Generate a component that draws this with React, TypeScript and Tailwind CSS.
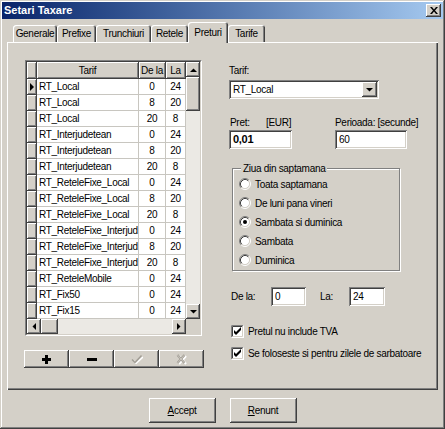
import React from "react";

const raised =
  "bg-[#d4d0c8] shadow-[inset_-1px_-1px_0_#404040,inset_1px_1px_0_#ffffff,inset_-2px_-2px_0_#808080]";
const sunken =
  "bg-white shadow-[inset_1px_1px_0_#808080,inset_-1px_-1px_0_#ffffff,inset_2px_2px_0_#404040,inset_-2px_-2px_0_#d4d0c8]";
const cellRaised =
  "bg-[#d4d0c8] border-r border-b border-[#404040] shadow-[inset_1px_1px_0_#ffffff,inset_-1px_-1px_0_#808080]";

const rows: Array<[string, number, number]> = [
  ["RT_Local", 0, 24],
  ["RT_Local", 8, 20],
  ["RT_Local", 20, 8],
  ["RT_Interjudetean", 0, 24],
  ["RT_Interjudetean", 8, 20],
  ["RT_Interjudetean", 20, 8],
  ["RT_ReteleFixe_Local", 0, 24],
  ["RT_ReteleFixe_Local", 8, 20],
  ["RT_ReteleFixe_Local", 20, 8],
  ["RT_ReteleFixe_Interjud", 0, 24],
  ["RT_ReteleFixe_Interjud", 8, 20],
  ["RT_ReteleFixe_Interjud", 20, 8],
  ["RT_ReteleMobile", 0, 24],
  ["RT_Fix50", 0, 24],
  ["RT_Fix15", 0, 24],
];

const tabs = [
  { label: "Generale", w: "w-[44px]" },
  { label: "Prefixe", w: "w-[39px]" },
  { label: "Trunchiuri", w: "w-[55px]" },
  { label: "Retele", w: "w-[37px]" },
  { label: "Preturi", w: "w-[40px]", active: true },
  { label: "Tarife", w: "w-[37px]" },
];

const Arrow = ({ dir }: { dir: "up" | "down" | "left" | "right" }) => {
  const pts = {
    up: "0,4 7,4 3.5,0.5",
    down: "0,0 7,0 3.5,3.5",
    left: "4,0 4,7 0.5,3.5",
    right: "0,0 0,7 3.5,3.5",
  }[dir];
  const vertical = dir === "up" || dir === "down";
  return (
    <svg width={vertical ? 7 : 4} height={vertical ? 4 : 7} viewBox={vertical ? "0 0 7 4" : "0 0 4 7"}>
      <polygon points={pts} fill="#000" />
    </svg>
  );
};

const ScrollBtn = ({ dir }: { dir: "up" | "down" | "left" | "right" }) => (
  <div className={`${raised} flex h-[15px] w-[14px] shrink-0 items-center justify-center`}>
    <Arrow dir={dir} />
  </div>
);

const Radio = ({ checked }: { checked?: boolean }) => (
  <svg width="12" height="12" viewBox="0 0 12 12" className="shrink-0">
    <circle cx="6" cy="6" r="4.5" fill="#fff" />
    <path d="M2.11 9.89 A5.5 5.5 0 0 1 9.89 2.11" fill="none" stroke="#808080" />
    <path d="M9.89 2.11 A5.5 5.5 0 0 1 2.11 9.89" fill="none" stroke="#ffffff" />
    <path d="M2.82 9.18 A4.5 4.5 0 0 1 9.18 2.82" fill="none" stroke="#404040" />
    <path d="M9.18 2.82 A4.5 4.5 0 0 1 2.82 9.18" fill="none" stroke="#d4d0c8" />
    {checked && <circle cx="6" cy="6" r="2" fill="#000" />}
  </svg>
);

const Check = () => (
  <svg width="13" height="13" viewBox="0 0 13 13" className="shrink-0">
    <rect x="0" y="0" width="13" height="13" fill="#ffffff" />
    <path d="M0.5 12.5 V0.5 H12.5" fill="none" stroke="#808080" />
    <path d="M1.5 11.5 V1.5 H11.5" fill="none" stroke="#404040" />
    <path d="M1.5 11.5 H11.5 V1.5" fill="none" stroke="#d4d0c8" />
    <path d="M0.5 12.5 H12.5 V0.5" fill="none" stroke="#ffffff" />
    <path d="M3 5 L5 7 L10 2 L10 5 L5 10 L3 8 Z" fill="#000" />
  </svg>
);

const ToolIcon = ({ kind }: { kind: "plus" | "minus" | "ok" | "cancel" }) => {
  if (kind === "plus")
    return (
      <svg width="9" height="9" viewBox="0 0 9 9">
        <path d="M3 0 H6 V3 H9 V6 H6 V9 H3 V6 H0 V3 H3 Z" fill="#000" />
      </svg>
    );
  if (kind === "minus")
    return (
      <svg width="10" height="3" viewBox="0 0 10 3">
        <rect width="10" height="3" fill="#000" />
      </svg>
    );
  if (kind === "ok")
    return (
      <svg width="12" height="10" viewBox="0 0 12 10">
        <path d="M2 6 L4 8.5 L11 2" fill="none" stroke="#ffffff" strokeWidth="1.4" transform="translate(1 1)" />
        <path d="M1 5.5 L4 8.5 L10.5 1.5" fill="none" stroke="#a09c94" strokeWidth="1.4" />
      </svg>
    );
  return (
    <svg width="11" height="11" viewBox="0 0 11 11">
      <path d="M2 1 L9 9 M9 1 L2 9" fill="none" stroke="#ffffff" strokeWidth="2.2" transform="translate(1 1)" />
      <path d="M1.5 1 L8.5 9 M8.5 1 L1.5 9" fill="none" stroke="#a09c94" strokeWidth="2.2" />
      <path d="M1.5 1 L8.5 9 M8.5 1 L1.5 9" fill="none" stroke="#d4d0c8" strokeWidth="0.8" />
    </svg>
  );
};

const DataGrid = () => (
  <div className="w-[177px] border border-t-[#808080] border-l-[#808080] border-b-white border-r-white">
    <div className="border border-t-[#404040] border-l-[#404040] border-b-[#d4d0c8] border-r-[#d4d0c8]">
      <div className="flex">
        <div className="w-[159px] bg-white">
          <div className="flex h-[17px]">
            <div className={`${cellRaised} w-[10px]`} />
            <div className={`${cellRaised} flex w-[102px] items-center justify-center`}>Tarif</div>
            <div className={`${cellRaised} flex w-[27px] items-center justify-center overflow-hidden whitespace-nowrap`}>
              De la
            </div>
            <div className={`${cellRaised} flex w-[20px] items-center justify-center`}>La</div>
          </div>
          {rows.map(([name, from, to], i) => (
            <div key={i} className="flex h-[16px]">
              <div className={`${cellRaised} flex w-[10px] items-center justify-center`}>
                {i === 0 && (
                  <svg width="4" height="8" viewBox="0 0 4 8">
                    <polygon points="0,0 0,8 4,4" fill="#000" />
                  </svg>
                )}
              </div>
              <div className="w-[102px] overflow-hidden whitespace-nowrap border-r border-b border-[#c8c6c0] pl-[2px] leading-[15px]">
                {name}
              </div>
              <div className="w-[27px] border-r border-b border-[#c8c6c0] text-center leading-[15px]">{from}</div>
              <div className="w-[20px] border-r border-b border-[#c8c6c0] text-center leading-[15px]">{to}</div>
            </div>
          ))}
        </div>
        <div className="flex w-[14px] flex-col bg-[#ebe9e4]">
          <ScrollBtn dir="up" />
          <div className={`${raised} h-[34px]`} />
          <div className="flex-1" />
          <ScrollBtn dir="down" />
        </div>
      </div>
      <div className="flex">
        <div className="flex w-[159px] bg-[#ebe9e4]">
          <ScrollBtn dir="left" />
          <div className={`${raised} h-[15px] w-[17px]`} />
          <div className="flex-1" />
          <ScrollBtn dir="right" />
        </div>
        <div className="h-[15px] w-[14px] bg-[#d4d0c8]" />
      </div>
    </div>
  </div>
);

const Field = ({ w, value, bold }: { w: string; value: string; bold?: boolean }) => (
  <div className={`${sunken} ${w} flex h-[19px] items-center px-[4px] ${bold ? "font-bold text-[11px]" : ""}`}>
    {value}
  </div>
);

export default function App() {
  return (
    <div className="h-[429px] w-[445px] bg-[#d4d0c8] p-[2px] font-['Liberation_Sans',Arial,sans-serif] text-[10px] tracking-[-0.3px] text-black shadow-[inset_-1px_-1px_0_#404040,inset_1px_1px_0_#d4d0c8,inset_-2px_-2px_0_#808080,inset_2px_2px_0_#ffffff]">
      {/* Title bar */}
      <div className="flex h-[17px] items-center justify-between bg-gradient-to-r from-[#0a246a] to-[#a6caf0] pl-[2px] pr-[2px]">
        <span className="text-[11px] font-bold tracking-normal text-white">Setari Taxare</span>
        <div className={`${raised} flex h-[13px] w-[15px] items-center justify-center`}>
          <svg width="8" height="7" viewBox="0 0 8 7">
            <path d="M0 0 H2 L4 2.5 L6 0 H8 L5 3.5 L8 7 H6 L4 4.5 L2 7 H0 L3 3.5 Z" fill="#000" />
          </svg>
        </div>
      </div>

      {/* Tabs */}
      <div className="mx-[5px] mt-[3px] flex h-[20px] items-end pl-[6px]">
        {tabs.map((t) =>
          t.active ? (
            <div
              key={t.label}
              className={`${t.w} relative z-10 -mb-px flex h-[21px] items-start justify-center rounded-t-[3px] bg-[#d4d0c8] pt-[3px] shadow-[inset_1px_1px_0_#ffffff,inset_-1px_0_0_#404040,inset_-2px_0_0_#808080]`}
            >
              {t.label}
            </div>
          ) : (
            <div
              key={t.label}
              className={`${t.w} flex h-[17px] items-center justify-center rounded-t-[3px] bg-[#d4d0c8] shadow-[inset_1px_1px_0_#ffffff,inset_-1px_0_0_#404040,inset_-2px_0_0_#808080]`}
            >
              {t.label}
            </div>
          )
        )}
      </div>

      {/* Tab panel */}
      <div className="mx-[5px] flex h-[348px] pl-[18px] pt-[18px] shadow-[inset_1px_1px_0_#ffffff,inset_-1px_-1px_0_#404040,inset_-2px_-2px_0_#808080]">
        <div className="flex flex-col">
          <DataGrid />
          <div className="-ml-px mt-[14px] flex">
            {(["plus", "minus", "ok", "cancel"] as const).map((k) => (
              <div key={k} className={`${raised} flex h-[18px] w-[45px] items-center justify-center`}>
                <ToolIcon kind={k} />
              </div>
            ))}
          </div>
        </div>

        <div className="ml-[25px] flex flex-col">
          <div className="mt-[4px] leading-[13px]">Tarif:</div>
          <div className={`${sunken} mt-[3px] flex h-[19px] w-[150px] items-center justify-between pl-[4px] pr-[2px]`}>
            <span>RT_Local</span>
            <div className={`${raised} flex h-[15px] w-[15px] items-center justify-center`}>
              <Arrow dir="down" />
            </div>
          </div>

          <div className="mt-[17px] flex leading-[13px]">
            <span className="w-[37px] pl-[1px]">Pret:</span>
            <span className="w-[69px]">[EUR]</span>
            <span>Perioada: [secunde]</span>
          </div>
          <div className="mt-[1px] flex">
            <Field w="w-[63px]" value="0,01" bold />
            <div className="ml-[43px]">
              <Field w="w-[72px]" value="60" />
            </div>
          </div>

          <fieldset className="ml-[3px] mt-[13px] h-[109px] w-[168px] border border-[#808080] pl-[6px] shadow-[inset_1px_1px_0_#ffffff,1px_1px_0_#ffffff]">
            <legend className="ml-[2px] bg-[#d4d0c8] px-[2px] leading-[13px]">Ziua din saptamana</legend>
            <div className="mt-[3px] flex flex-col gap-[7px]">
              {["Toata saptamana", "De luni pana vineri", "Sambata si duminica", "Sambata", "Duminica"].map((l) => (
                <div key={l} className="flex h-[12px] items-center gap-[4px]">
                  <Radio checked={l === "Sambata si duminica"} />
                  <span>{l}</span>
                </div>
              ))}
            </div>
          </fieldset>

          <div className="ml-[2px] mt-[16px] flex items-center">
            <span className="w-[40px]">De la:</span>
            <Field w="w-[35px]" value="0" />
            <span className="ml-[14px] w-[29px]">La:</span>
            <Field w="w-[36px]" value="24" />
          </div>

          <div className="ml-[2px] mt-[18px] flex items-center gap-[4px]">
            <Check />
            <span>Pretul nu include TVA</span>
          </div>
          <div className="ml-[2px] mt-[7px] flex items-center gap-[4px]">
            <Check />
            <span>Se foloseste si pentru zilele de sarbatoare</span>
          </div>
        </div>
      </div>

      {/* Dialog buttons */}
      <div className="mt-[8px] flex justify-center gap-[14px]">
        <div className={`${raised} flex h-[25px] w-[67px] items-center justify-center`}>
          <span>
            <span className="underline">A</span>ccept
          </span>
        </div>
        <div className={`${raised} flex h-[25px] w-[67px] items-center justify-center`}>
          <span>
            <span className="underline">R</span>enunt
          </span>
        </div>
      </div>
    </div>
  );
}
